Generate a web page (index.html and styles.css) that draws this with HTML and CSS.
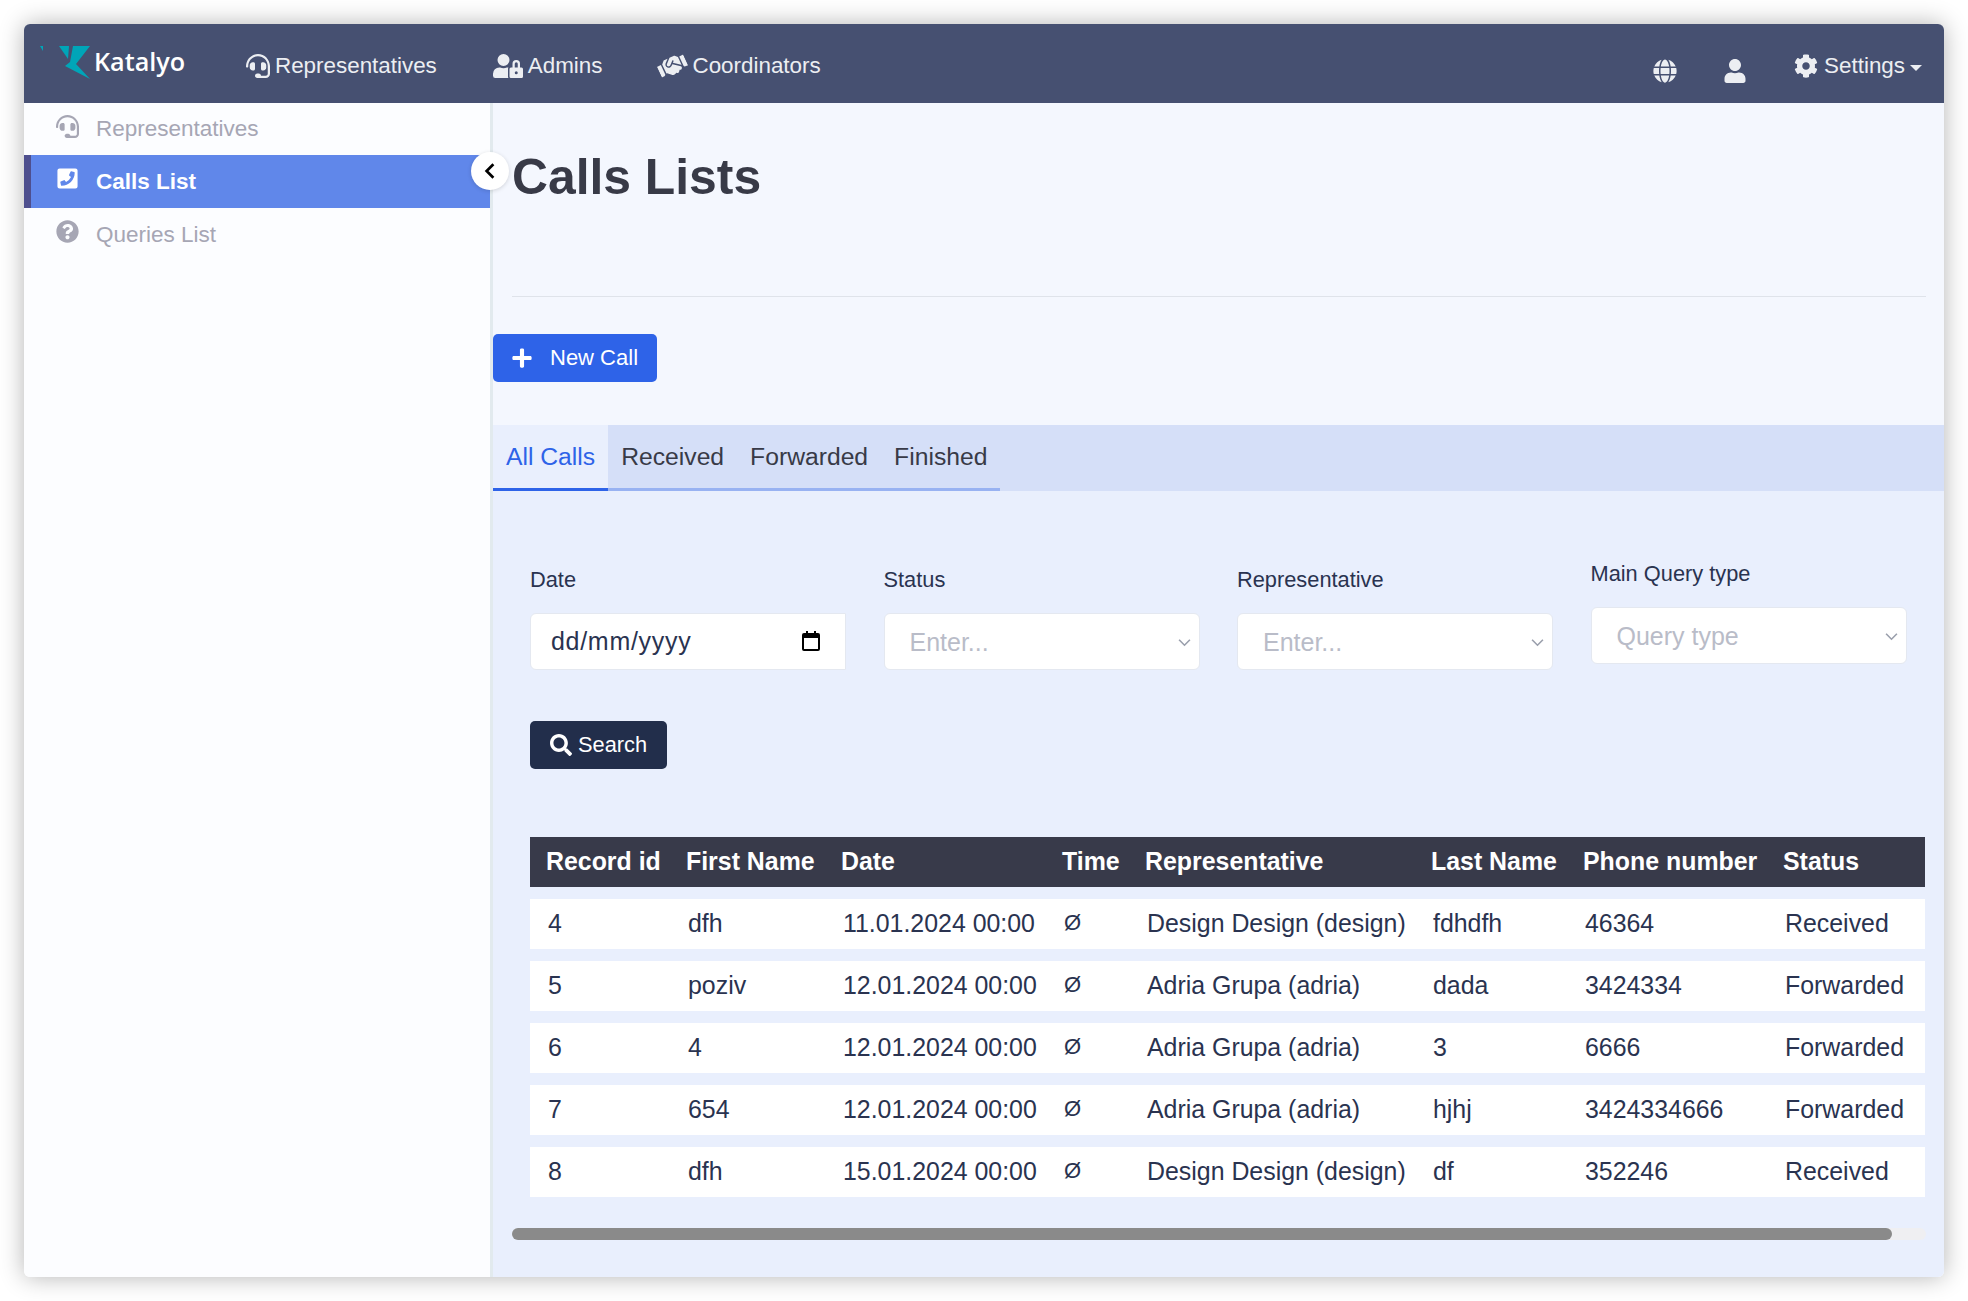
FILE: index.html
```html
<!DOCTYPE html>
<html lang="en">

<head>
  <meta charset="UTF-8">
  <meta name="viewport" content="width=device-width, initial-scale=1.0">
  <title>Calls Lists</title>
  <link rel="stylesheet" href="styles.css">
</head>

<body>
  <div class="window">
    <nav class="topbar">
      <a class="brand">
        <svg class="brand-mark" viewBox="0 0 52 36">
          <polygon points="0,2 3,2 3,7" />
          <polygon points="19,2 29,2 28,15" />
          <polygon points="50,2 33,2 30,18 25,22 50,35 36,20" />
        </svg>
        <span class="brand-name">Katalyo</span>
      </a>
      <a class="nav-link">
        <svg class="nav-icon" viewBox="0 0 512 512"><path d="M192 208c0-17.67-14.33-32-32-32h-16c-35.35 0-64 28.65-64 64v48c0 35.35 28.65 64 64 64h16c17.67 0 32-14.33 32-32V208zm176 144c35.35 0 64-28.65 64-64v-48c0-35.35-28.65-64-64-64h-16c-17.67 0-32 14.33-32 32v112c0 17.67 14.33 32 32 32h16zM256 0C113.18 0 4.58 118.83 0 256v16c0 8.84 7.16 16 16 16h16c8.84 0 16-7.16 16-16v-16c0-114.69 93.31-208 208-208s208 93.31 208 208h-.12c.08 2.43.12 165.72.12 165.72 0 23.35-18.93 42.28-42.28 42.28H320c0-26.51-21.49-48-48-48h-32c-26.51 0-48 21.49-48 48s21.49 48 48 48h181.72c49.86 0 90.28-40.42 90.28-90.28V256C507.42 118.83 398.82 0 256 0z"/></svg>
        Representatives
      </a>
      <a class="nav-link">
        <svg class="nav-icon nav-icon-wide" viewBox="0 0 640 512"><path d="M224 256A128 128 0 1 0 96 128a128 128 0 0 0 128 128zm96 64a63.08 63.08 0 0 1 8.1-30.5c-4.8-.5-9.5-1.5-14.5-1.5h-16.7a174.08 174.08 0 0 1-145.8 0h-16.7A134.43 134.43 0 0 0 0 422.4V464a48 48 0 0 0 48 48h280.9a63.54 63.54 0 0 1-8.9-32zm288-32h-32v-80a80 80 0 0 0-160 0v80h-32a32 32 0 0 0-32 32v160a32 32 0 0 0 32 32h224a32 32 0 0 0 32-32V320a32 32 0 0 0-32-32zM496 432a32 32 0 1 1 32-32 32 32 0 0 1-32 32zm32-144h-64v-80a32 32 0 0 1 64 0z"/></svg>
        Admins
      </a>
      <a class="nav-link">
        <svg class="nav-icon nav-icon-wide nav-icon-tilt" viewBox="0 0 640 512"><path d="M434.7 64h-85.9c-8 0-15.7 3-21.6 8.4l-98.3 90c-.1.1-.2.3-.3.4-16.6 15.6-16.3 40.5-2.1 56 12.7 13.9 39.4 17.6 56.1 2.7.1-.1.3-.1.4-.2l79.9-73.2c6.5-5.9 16.7-5.5 22.6 1 6 6.5 5.5 16.6-1 22.6l-26.1 23.9L504 313.8c2.9 2.4 5.5 5 7.9 7.7V128l-54.6-54.6c-5.9-6-14.1-9.4-22.6-9.4zM544 128.2v223.9c0 17.7 14.3 32 32 32h64V128.2h-96zM0 384h64c17.7 0 32-14.3 32-32V128.2H0V384zm483.9-45.3L334.6 217.5l-30 27.5c-29.7 27.1-75.2 24.5-101.7-4.4-26.9-29.4-24.8-74.9 4.4-101.7L289.1 64h-83.8c-8.5 0-16.6 3.4-22.6 9.4L128 128v223.9h18.3l90.5 81.9c27.4 22.3 67.7 18.1 90-9.3l.2-.2 17.9 15.5c15.9 13 39.4 10.5 52.3-5.4l31.4-38.6 5.4 4.4c13.7 11.1 33.9 9.1 45-4.7l9.5-11.7c11.2-13.8 9.1-33.9-4.6-45.1z"/></svg>
        Coordinators
      </a>
      <div class="topbar-right">
        <a class="nav-glyph"><svg class="nav-icon" viewBox="0 0 496 512"><path d="M336.5 160C322 70.7 287.8 8 248 8s-74 62.7-88.5 152h177zM152 256c0 22.2 1.2 43.5 3.3 64h185.3c2.1-20.5 3.3-41.8 3.3-64s-1.2-43.5-3.3-64H155.3c-2.1 20.5-3.3 41.8-3.3 64zm324.7-96c-28.6-67.9-86.5-120.4-158-141.6 24.4 33.8 41.2 84.7 50 141.6h108zM177.2 18.4C105.8 39.6 47.8 92.1 19.3 160h108c8.7-56.9 25.5-107.8 49.9-141.6zM487.4 192H372.7c2.1 21 3.3 42.5 3.3 64s-1.2 43-3.3 64h114.6c5.5-20.5 8.6-41.8 8.6-64s-3.1-43.5-8.5-64zM120 256c0-21.5 1.2-43 3.3-64H8.6C3.2 212.5 0 233.8 0 256s3.2 43.5 8.6 64h114.6c-2-21-3.2-42.5-3.2-64zm39.5 96c14.5 89.3 48.7 152 88.5 152s74-62.7 88.5-152h-177zm159.3 141.6c71.4-21.2 129.4-73.7 158-141.6h-108c-8.8 56.9-25.6 107.8-50 141.6zM19.3 352c28.6 67.9 86.5 120.4 158 141.6-24.4-33.8-41.2-84.7-50-141.6h-108z"/></svg></a>
        <a class="nav-glyph"><svg class="nav-icon" viewBox="0 0 448 512"><path d="M224 256c70.7 0 128-57.3 128-128S294.7 0 224 0 96 57.3 96 128s57.3 128 128 128zm89.6 32h-16.7c-22.2 10.2-46.9 16-72.9 16s-50.6-5.8-72.9-16h-16.7C60.2 288 0 348.2 0 422.4V464c0 26.5 21.5 48 48 48h352c26.5 0 48-21.5 48-48v-41.6c0-74.2-60.2-134.4-134.4-134.4z"/></svg></a>
        <a class="nav-link settings">
          <svg class="nav-icon" viewBox="0 0 512 512"><path d="M487.4 315.7l-42.6-24.6c4.3-23.2 4.3-47 0-70.2l42.6-24.6c4.9-2.8 7.1-8.6 5.5-14-11.1-35.6-30-67.8-54.7-94.6-3.8-4.1-10-5.1-14.8-2.3L380.8 110c-17.9-15.4-38.5-27.3-60.8-35.1V25.8c0-5.6-3.9-10.5-9.4-11.7-36.7-8.2-74.3-7.8-109.2 0-5.5 1.2-9.4 6.1-9.4 11.7V75c-22.2 7.9-42.8 19.8-60.8 35.1L88.7 85.5c-4.9-2.8-11-1.9-14.8 2.3-24.7 26.7-43.6 58.9-54.7 94.6-1.7 5.4.6 11.2 5.5 14L67.3 221c-4.3 23.2-4.3 47 0 70.2l-42.6 24.6c-4.9 2.8-7.1 8.6-5.5 14 11.1 35.6 30 67.8 54.7 94.6 3.8 4.1 10 5.1 14.8 2.3l42.6-24.6c17.9 15.4 38.5 27.3 60.8 35.1v49.2c0 5.6 3.9 10.5 9.4 11.7 36.7 8.2 74.3 7.8 109.2 0 5.5-1.2 9.4-6.1 9.4-11.7v-49.2c22.2-7.9 42.8-19.8 60.8-35.1l42.6 24.6c4.9 2.8 11 1.9 14.8-2.3 24.7-26.7 43.6-58.9 54.7-94.6 1.5-5.5-.7-11.3-5.6-14.1zM256 336c-44.1 0-80-35.9-80-80s35.9-80 80-80 80 35.9 80 80-35.9 80-80 80z"/></svg>
          Settings
          <span class="caret"></span>
        </a>
      </div>
    </nav>

    <div class="body-row">
      <aside class="sidebar">
        <a class="side-item">
          <svg class="side-icon" viewBox="0 0 512 512"><path d="M192 208c0-17.67-14.33-32-32-32h-16c-35.35 0-64 28.65-64 64v48c0 35.35 28.65 64 64 64h16c17.67 0 32-14.33 32-32V208zm176 144c35.35 0 64-28.65 64-64v-48c0-35.35-28.65-64-64-64h-16c-17.67 0-32 14.33-32 32v112c0 17.67 14.33 32 32 32h16zM256 0C113.18 0 4.58 118.83 0 256v16c0 8.84 7.16 16 16 16h16c8.84 0 16-7.16 16-16v-16c0-114.69 93.31-208 208-208s208 93.31 208 208h-.12c.08 2.43.12 165.72.12 165.72 0 23.35-18.93 42.28-42.28 42.28H320c0-26.51-21.49-48-48-48h-32c-26.51 0-48 21.49-48 48s21.49 48 48 48h181.72c49.86 0 90.28-40.42 90.28-90.28V256C507.42 118.83 398.82 0 256 0z"/></svg>
          Representatives
        </a>
        <a class="side-item active">
          <svg class="side-icon side-icon-flip" viewBox="0 0 448 512"><path d="M400 32H48A48 48 0 0 0 0 80v352a48 48 0 0 0 48 48h352a48 48 0 0 0 48-48V80a48 48 0 0 0-48-48zm-16.39 307.37l-15 65A15 15 0 0 1 354 416C194 416 64 286.29 64 126a15.7 15.7 0 0 1 11.63-14.61l65-15A18.23 18.23 0 0 1 144 96a16.27 16.27 0 0 1 13.79 9.09l30 70A17.9 17.9 0 0 1 189 181a17 17 0 0 1-5.5 11.61l-37.89 31a231.91 231.91 0 0 0 110.78 110.78l31-37.89A17 17 0 0 1 299 291a17.85 17.85 0 0 1 5.91 1.21l70 30A16.25 16.25 0 0 1 384 336a17.41 17.41 0 0 1-.39 3.37z"/></svg>
          Calls List
        </a>
        <a class="side-item">
          <svg class="side-icon" viewBox="0 0 512 512"><path d="M504 256c0 136.997-111.043 248-248 248S8 392.997 8 256C8 119.083 119.043 8 256 8s248 111.083 248 248zM262.655 90c-54.497 0-89.255 22.957-116.549 63.758-3.536 5.286-2.353 12.415 2.715 16.258l34.699 26.31c5.205 3.947 12.621 3.008 16.665-2.122 17.864-22.658 30.113-35.797 57.303-35.797 20.429 0 45.698 13.148 45.698 32.958 0 14.976-12.363 22.667-32.534 33.976C247.128 238.528 216 254.941 216 296v4c0 6.627 5.373 12 12 12h56c6.627 0 12-5.373 12-12v-1.333c0-28.462 83.186-29.647 83.186-106.667 0-58.002-60.165-102-116.531-102zM256 338c-25.365 0-46 20.635-46 46 0 25.364 20.635 46 46 46s46-20.636 46-46c0-25.365-20.635-46-46-46z"/></svg>
          Queries List
        </a>
        <button class="collapse-toggle">
          <svg viewBox="0 0 16 16"><path d="M11 2 L5 8 L11 14" fill="none" stroke="#000" stroke-width="2.4"/></svg>
        </button>
      </aside>

      <main class="content">
        <section class="page-head">
          <h1 class="page-title">Calls Lists</h1>
          <hr class="page-rule">
          <button class="new-call">
            <svg class="new-call-icon" viewBox="0 0 448 512"><path d="M416 208H272V64c0-17.67-14.33-32-32-32h-32c-17.67 0-32 14.33-32 32v144H32c-17.67 0-32 14.33-32 32v32c0 17.67 14.33 32 32 32h144v144c0 17.67 14.33 32 32 32h32c17.67 0 32-14.33 32-32V304h144c17.67 0 32-14.33 32-32v-32c0-17.67-14.33-32-32-32z"/></svg>
            New Call
          </button>
        </section>

        <section class="panel">
          <div class="tabs">
            <a class="tab active">All Calls</a>
            <a class="tab">Received</a>
            <a class="tab">Forwarded</a>
            <a class="tab">Finished</a>
          </div>

          <div class="filters">
            <div class="field">
              <label class="field-label">Date</label>
              <div class="control control-date">
                dd/mm/yyyy
                <svg class="calendar-icon" viewBox="0 0 20 22"><path d="M5 1h2v2h6V1h2v2h2a2 2 0 0 1 2 2v14a2 2 0 0 1-2 2H3a2 2 0 0 1-2-2V5a2 2 0 0 1 2-2h2zM3 8v11h14V8z"/></svg>
              </div>
            </div>
            <div class="field">
              <label class="field-label">Status</label>
              <div class="control">
                Enter...
                <svg class="chevron" viewBox="0 0 12 8"><path d="M1 1.5 L6 6.5 L11 1.5" fill="none" stroke="#9a9fac" stroke-width="1.5"/></svg>
              </div>
            </div>
            <div class="field">
              <label class="field-label">Representative</label>
              <div class="control">
                Enter...
                <svg class="chevron" viewBox="0 0 12 8"><path d="M1 1.5 L6 6.5 L11 1.5" fill="none" stroke="#9a9fac" stroke-width="1.5"/></svg>
              </div>
            </div>
            <div class="field field-raised">
              <label class="field-label">Main Query type</label>
              <div class="control">
                Query type
                <svg class="chevron" viewBox="0 0 12 8"><path d="M1 1.5 L6 6.5 L11 1.5" fill="none" stroke="#9a9fac" stroke-width="1.5"/></svg>
              </div>
            </div>
          </div>

          <button class="search">
            <svg class="search-icon" viewBox="0 0 512 512"><path d="M505 442.7L405.3 343c-4.5-4.5-10.6-7-17-7H372c27.6-35.3 44-79.7 44-128C416 93.1 322.9 0 208 0S0 93.1 0 208s93.1 208 208 208c48.3 0 92.7-16.4 128-44v16.3c0 6.4 2.5 12.5 7 17l99.7 99.7c9.4 9.4 24.6 9.4 33.9 0l28.3-28.3c9.4-9.4 9.4-24.6.1-34zM208 336c-70.7 0-128-57.2-128-128 0-70.7 57.2-128 128-128 70.7 0 128 57.2 128 128 0 70.7-57.2 128-128 128z"/></svg>
            Search
          </button>

          <div class="table-wrap">
            <table class="calls">
              <thead>
                <tr>
                  <th class="col-id">Record id</th>
                  <th class="col-first">First Name</th>
                  <th class="col-date">Date</th>
                  <th class="col-time">Time</th>
                  <th class="col-rep">Representative</th>
                  <th class="col-last">Last Name</th>
                  <th class="col-phone">Phone number</th>
                  <th class="col-status">Status</th>
                </tr>
              </thead>
              <tbody>
                <tr>
                  <td>4</td><td>dfh</td><td>11.01.2024 00:00</td><td class="empty">Ø</td><td>Design Design (design)</td><td>fdhdfh</td><td>46364</td><td>Received</td>
                </tr>
                <tr>
                  <td>5</td><td>poziv</td><td>12.01.2024 00:00</td><td class="empty">Ø</td><td>Adria Grupa (adria)</td><td>dada</td><td>3424334</td><td>Forwarded</td>
                </tr>
                <tr>
                  <td>6</td><td>4</td><td>12.01.2024 00:00</td><td class="empty">Ø</td><td>Adria Grupa (adria)</td><td>3</td><td>6666</td><td>Forwarded</td>
                </tr>
                <tr>
                  <td>7</td><td>654</td><td>12.01.2024 00:00</td><td class="empty">Ø</td><td>Adria Grupa (adria)</td><td>hjhj</td><td>3424334666</td><td>Forwarded</td>
                </tr>
                <tr>
                  <td>8</td><td>dfh</td><td>15.01.2024 00:00</td><td class="empty">Ø</td><td>Design Design (design)</td><td>df</td><td>352246</td><td>Received</td>
                </tr>
              </tbody>
            </table>
            <div class="scroll-track">
              <div class="scroll-thumb"></div>
            </div>
          </div>
        </section>
      </main>
    </div>
  </div>
</body>

</html>
```

FILE: styles.css
```css
html,
body {
  height: 100%;
}

body {
  margin: 0;
  padding: 24px;
  box-sizing: border-box;
  background-color: #ffffff;
  font-family: "Liberation Sans", Arial, sans-serif;
  color: #2a3350;
}

.window {
  width: 1920px;
  height: 1253px;
  display: flex;
  flex-direction: column;
  border-radius: 6px;
  overflow: hidden;
  box-shadow: 0 0 24px rgba(0, 0, 0, 0.3);
}

/* top bar */

.topbar {
  flex: 0 0 79px;
  display: flex;
  align-items: center;
  padding-left: 16px;
  background-color: #465071;
  color: #eceef2;
}

.brand {
  display: flex;
  align-items: center;
  width: 206px;
  margin-top: -4px;
}

.brand-mark {
  width: 52px;
  height: 36px;
  fill: #00a5b8;
}

.brand-name {
  margin-left: 2px;
  margin-top: -2px;
  font-family: "Open Sans", sans-serif;
  font-size: 25.2px;
  font-weight: 600;
  color: #ffffff;
}

.nav-link {
  display: flex;
  align-items: center;
  gap: 5px;
  margin-right: 56px;
  font-size: 22.4px;
  margin-top: 5px;
}

.nav-icon {
  width: 24px;
  height: 24px;
  fill: #eceef2;
}

.nav-icon-wide {
  width: 30px;
}

.nav-icon-tilt {
  width: 29px;
  transform: rotate(-25deg);
}

.topbar-right {
  display: flex;
  align-items: center;
  margin-left: auto;
}

.nav-glyph {
  display: flex;
  margin-right: 46px;
  margin-top: 14px;
}

.settings {
  gap: 6px;
  margin-left: 1px;
  margin-right: 22px;
}

.caret {
  width: 0;
  height: 0;
  margin-left: -1px;
  margin-top: 3px;
  border-left: 6px solid transparent;
  border-right: 6px solid transparent;
  border-top: 6px solid #eceef2;
}

.body-row {
  flex: 1;
  display: flex;
  min-height: 0;
}

/* sidebar */

.sidebar {
  flex: 0 0 466px;
  position: relative;
  background-color: #fcfdff;
  border-right: 3px solid #e2eaee;
}

.side-item {
  display: flex;
  align-items: center;
  gap: 17px;
  height: 53px;
  padding-left: 32px;
  font-size: 22.5px;
  color: #a6a6b4;
}

.side-item:first-child {
  height: 52px;
}

.side-icon {
  width: 23px;
  height: 23px;
  margin-top: -6px;
  fill: #a6a6b4;
}

.side-icon-flip {
  transform: scaleX(-1);
}

.side-item.active {
  padding-left: 25px;
  border-left: 7px solid #4e4f8e;
  background-color: #6087ea;
  font-weight: 700;
  color: #ffffff;
}

.side-item.active .side-icon {
  fill: #ffffff;
}

.collapse-toggle {
  position: absolute;
  top: 49px;
  right: -19px;
  width: 38px;
  height: 38px;
  padding: 0;
  display: flex;
  align-items: center;
  justify-content: center;
  border: none;
  border-radius: 50%;
  background: #ffffff;
  box-shadow: 0 1px 4px rgba(0, 0, 0, 0.15);
}

.collapse-toggle svg {
  width: 18px;
  height: 18px;
}

/* content */

.content {
  flex: 1;
  display: flex;
  flex-direction: column;
  min-width: 0;
  background-color: #f4f7fe;
}

.page-head {
  height: 322px;
  box-sizing: border-box;
  padding-top: 44px;
}

.page-title {
  margin: 0 0 0 19px;
  font-size: 49.8px;
  line-height: 60px;
  color: #383a47;
}

.page-rule {
  margin: 89px 18px 37px 19px;
  border: none;
  border-top: 1px solid #dfe3ea;
}

.new-call {
  display: flex;
  align-items: center;
  gap: 18px;
  width: 164px;
  height: 48px;
  padding: 0 0 0 19px;
  border: none;
  border-radius: 5px;
  background-color: #2e63e8;
  font-family: inherit;
  font-size: 22px;
  color: #ffffff;
}

.new-call-icon {
  width: 20px;
  height: 22px;
  fill: #ffffff;
}

.panel {
  flex: 1;
  background-color: #e9effd;
}

.tabs {
  height: 66px;
  display: flex;
  background-color: #d5dff8;
}

.tab {
  display: flex;
  align-items: center;
  height: 63px;
  padding: 0 13px;
  border-bottom: 3px solid #98b2f2;
  font-size: 24.7px;
  color: #383a47;
}

.tab.active {
  background-color: #e9effd;
  border-bottom-color: #2e63e8;
  color: #2e63e8;
}

.filters {
  display: flex;
  gap: 37.5px;
  padding: 75px 0 0 37px;
}

.field {
  width: 316px;
}

.field-raised {
  margin-top: -6px;
}

.field-label {
  display: block;
  height: 26px;
  margin-bottom: 21px;
  font-size: 21.8px;
  line-height: 28px;
}

.control {
  display: flex;
  align-items: center;
  justify-content: space-between;
  box-sizing: border-box;
  height: 57px;
  padding: 1px 8px 0 25px;
  border: 1px solid #e4e8f0;
  border-radius: 6px;
  background-color: #ffffff;
  font-size: 25px;
  color: #b9bcc8;
}

.control-date {
  padding: 0 24px 0 20px;
  border-radius: 6px 0 0 6px;
  letter-spacing: 0.7px;
  color: #2a3350;
}

.calendar-icon {
  width: 20px;
  height: 22px;
  margin-top: -2px;
  fill: #000000;
}

.chevron {
  width: 13px;
  height: 9px;
}

.search {
  display: flex;
  align-items: center;
  gap: 6px;
  margin: 51px 0 0 37px;
  width: 137px;
  height: 48px;
  padding: 0 0 0 20px;
  border: none;
  border-radius: 5px;
  background-color: #222e4b;
  font-family: inherit;
  font-size: 21.8px;
  color: #ffffff;
}

.search-icon {
  width: 22px;
  height: 22px;
  fill: #ffffff;
}

/* table */

.table-wrap {
  margin: 68px 18px 0 19px;
}

.calls {
  width: 1395px;
  margin-left: 18px;
  border-collapse: separate;
  border-spacing: 0 12px;
  margin-top: -12px;
  table-layout: fixed;
  font-size: 24.9px;
}

.calls th {
  height: 50px;
  padding: 0 0 1px 16px;
  box-sizing: border-box;
  background-color: #383a4a;
  text-align: left;
  white-space: nowrap;
  color: #ffffff;
}

.calls td {
  height: 50px;
  padding: 0 0 2px 18px;
  box-sizing: border-box;
  background-color: #ffffff;
  white-space: nowrap;
}

.calls td.empty {
  font-size: 22px;
}

.col-id { width: 140px; }
.col-first { width: 155px; }
.col-date { width: 221px; }
.col-time { width: 83px; }
.col-rep { width: 286px; }
.col-last { width: 152px; }
.col-phone { width: 200px; }
.col-status { width: 158px; }

.scroll-track {
  height: 12px;
  margin-top: 19px;
  border-radius: 6px;
  background-color: #efeff2;
}

.scroll-thumb {
  width: 1380px;
  height: 100%;
  border-radius: 6px;
  background-color: #8a8a8a;
}
```
